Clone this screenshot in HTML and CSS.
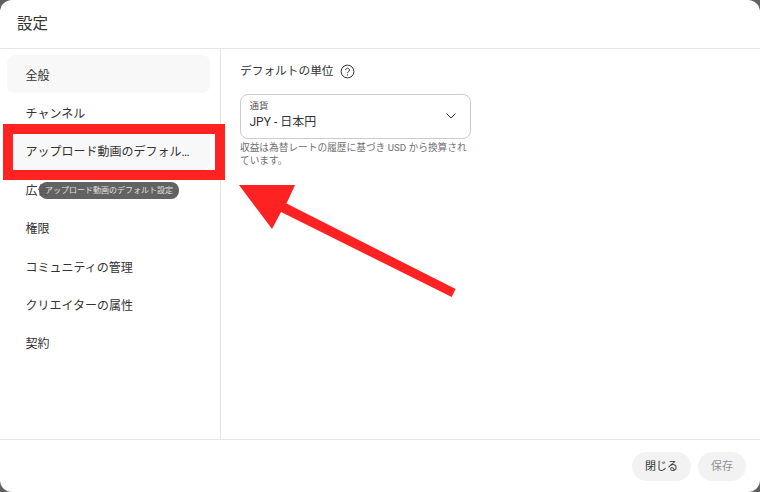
FILE: index.html
```html
<!DOCTYPE html>
<html lang="ja">
<head>
<meta charset="utf-8">
<title>設定</title>
<link rel="stylesheet" href="styles.css">
</head>
<body>
<div class="dialog">
  <header class="header">設定</header>
  <div class="main">
    <nav class="nav">
      <div class="item item-active">全般</div>
      <div class="item">チャンネル</div>
      <div class="item item-hover">アップロード動画のデフォルト設定</div>
      <div class="item">広告</div>
      <div class="item">権限</div>
      <div class="item">コミュニティの管理</div>
      <div class="item">クリエイターの属性</div>
      <div class="item">契約</div>
    </nav>
    <section class="content">
      <div class="heading">
        <span>デフォルトの単位</span>
        <svg class="help" width="15" height="15" viewBox="0 0 15 15"><circle cx="7.5" cy="7.5" r="6.4" fill="none" stroke="#333" stroke-width="1"/><path d="M5.6 6.1a1.9 1.9 0 1 1 2.9 1.6c-.7.4-1 .8-1 1.5" fill="none" stroke="#333" stroke-width="1"/><circle cx="7.5" cy="10.9" r=".7" fill="#333"/></svg>
      </div>
      <div class="select">
        <div class="select-text">
          <div class="select-label">通貨</div>
          <div class="select-value">JPY - 日本円</div>
        </div>
        <svg class="chevron" width="10" height="6" viewBox="0 0 10 6"><path d="M.5.5L5 5 9.500.5" fill="none" stroke="#333" stroke-width="1"/></svg>
      </div>
      <p class="hint">収益は為替レートの履歴に基づき USD から換算されています。</p>
    </section>
  </div>
  <footer class="footer">
    <button class="btn btn-close">閉じる</button>
    <button class="btn btn-save">保存</button>
  </footer>
</div>
<div class="tooltip">アップロード動画のデフォルト設定</div>
<div class="callout"></div>
<svg class="arrow" width="760" height="492" viewBox="0 0 760 492"><polygon fill="#ff2222" points="239,185 295,185 286.5,203.500 455.6,289 451.7,297 281,212 272,229"/></svg>
</body>
</html>
```
FILE: styles.css
```css
* { box-sizing: border-box; }
html, body { margin: 0; height: 100%; }
body {
  background: #606060;
  font-family: Roboto, "Noto Sans CJK JP", sans-serif;
  color: #333;
  overflow: hidden;
}
.dialog {
  width: 760px;
  height: 492px;
  background: #fff;
  border-radius: 12px;
  display: flex;
  flex-direction: column;
}
.header {
  height: 49px;
  flex: none;
  border-bottom: 1px solid #e5e5e5;
  padding: 14px 0 0 17px;
  font-size: 15.5px;
  line-height: 21px;
}
.main { flex: 1; display: flex; min-height: 0; }
.nav {
  width: 221px;
  flex: none;
  border-right: 1px solid #e5e5e5;
  padding: 6px 10px 0 7px;
  display: flex;
  flex-direction: column;
}
.item {
  height: 38.4px;
  flex: none;
  padding: 3.6px 19px 0 18.5px;
  border-radius: 8px;
  font-size: 12px;
  line-height: 34.8px;
  white-space: nowrap;
  overflow: hidden;
  text-overflow: ellipsis;
}
.item-active, .item-hover { background: #f8f8f8; }
.content { flex: 1; padding: 13px 0 0 19px; }
.heading {
  display: flex;
  align-items: center;
  gap: 6px;
  font-size: 11.7px;
  line-height: 18px;
}
.select {
  width: 231px;
  height: 45px;
  margin-top: 14px;
  border: 1px solid #ccc;
  border-radius: 8px;
  padding: 3px 14px 0 8.5px;
  display: flex;
  align-items: flex-start;
  justify-content: space-between;
}
.select-label { font-size: 9.5px; line-height: 15px; color: #606060; }
.select-value { font-size: 12px; line-height: 18px; }
.chevron { margin-top: 15px; }
.hint {
  width: 231px;
  margin: 3px 0 0;
  font-size: 9.7px;
  line-height: 12.5px;
  color: #707070;
}
.footer {
  height: 53px;
  flex: none;
  border-top: 1px solid #e5e5e5;
  padding: 12px 14px 0 0;
  display: flex;
  justify-content: flex-end;
  gap: 7px;
}
.btn {
  height: 29px;
  border: 0;
  border-radius: 15px;
  background: #f2f2f2;
  font-family: inherit;
  font-size: 11px;
  padding: 0 0 3px;
}
.btn-close { width: 59px; color: #333; }
.btn-save { width: 48px; color: #909090; }
.tooltip {
  position: absolute;
  left: 39px;
  top: 182px;
  width: 140px;
  height: 17px;
  border-radius: 8px;
  background: rgba(90, 90, 90, 0.95);
  color: #e0e0e0;
  font-size: 8px;
  line-height: 17px;
  text-align: center;
}
.callout {
  position: absolute;
  left: 3px;
  top: 124px;
  width: 222px;
  height: 56px;
  border: 10px solid #ff2222;
}
.arrow { position: absolute; left: 0; top: 0; }
```
